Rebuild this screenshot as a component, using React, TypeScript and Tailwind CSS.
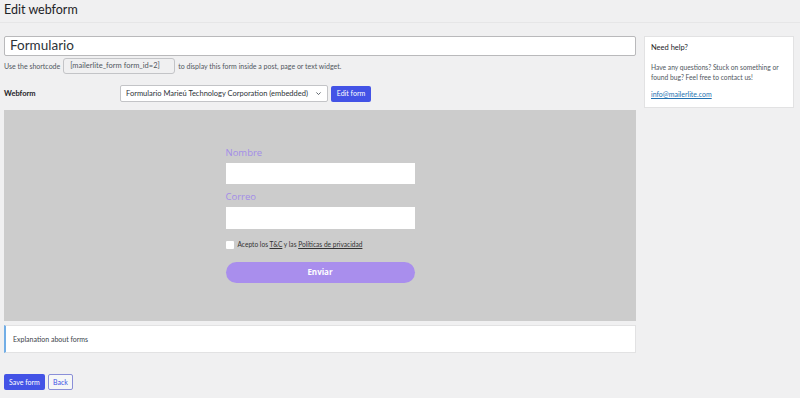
import React from 'react';

const App: React.FC = () => {
  return (
    <div className="min-h-[398px] bg-[#f0f0f1] text-[#3c434a] font-['Lato',sans-serif]">
      <div className="h-[23px] border-b border-[#e6e6e7] px-[4px] pt-[1px]">
        <h1 className="text-[12.5px] leading-[18px] text-[#1d2327]">Edit webform</h1>
      </div>

      <div className="flex gap-[8px] px-[4px] pt-[13px]">
        {/* main column */}
        <div className="w-[632px] flex flex-col">
          <div className="h-[20px] bg-white border border-[#b9b9bb] rounded-[2px] flex items-center px-[5px]">
            <span className="text-[13.5px] leading-none text-[#2c3338]">Formulario</span>
          </div>

          <div className="flex items-center mt-[2px] h-[16px] text-[7px] text-[#50575e] whitespace-nowrap">
            <span>Use the shortcode</span>
            <span className="ml-[3px] h-[16px] w-[112px] bg-[#f0f0f1] border border-[#c3c4c7] rounded-[3px] flex items-center px-[6px] text-[7.5px] text-[#50575e]">
              [mailerlite_form form_id=2]
            </span>
            <span className="ml-[3px]">to display this form inside a post, page or text widget.</span>
          </div>

          <div className="flex items-center mt-[11px] h-[17px]">
            <span className="w-[116px] text-[7.5px] font-bold text-[#1d2327]">Webform</span>
            <div className="h-[17px] w-[208px] bg-white border border-[#c3c4c7] rounded-[2px] flex items-center justify-between pl-[5px] pr-[5px]">
              <span className="text-[7.5px] text-[#2c3338] whitespace-nowrap">Formulario Marieú Technology Corporation (embedded)</span>
              <svg width="7" height="7" viewBox="0 0 10 10" fill="none">
                <path d="M2 3.5 L5 6.5 L8 3.5" stroke="#50575e" strokeWidth="1.3" />
              </svg>
            </div>
            <button className="ml-[3px] h-[16px] w-[40px] bg-[#4353e6] rounded-[2px] text-white text-[7px] leading-none">
              Edit form
            </button>
          </div>

          {/* preview */}
          <div className="mt-[8px] h-[211px] bg-[#cccccc] flex justify-center pt-[37px] font-['Open_Sans',sans-serif]">
            <div className="w-[189px] flex flex-col">
              <label className="text-[9.5px] leading-[12px] text-[#a38de8]">Nombre</label>
              <div className="mt-[4px] h-[21px] bg-white" />
              <label className="mt-[7px] text-[9.5px] leading-[12px] text-[#a38de8]">Correo</label>
              <div className="mt-[4px] h-[22px] bg-white" />
              <div className="mt-[11px] flex items-center gap-[4px]">
                <div className="w-[8px] h-[8px] bg-white rounded-[1px]" />
                <span className="text-[6.6px] text-[#333] font-['Lato',sans-serif]">
                  Acepto los <span className="underline">T&amp;C</span> y las{' '}
                  <span className="underline">Políticas de privacidad</span>
                </span>
              </div>
              <button className="mt-[12px] h-[21px] rounded-full bg-[#a98eed] text-white text-[8px] font-bold">
                Enviar
              </button>
            </div>
          </div>

          <div className="mt-[4px] h-[28px] bg-white border border-[#e2e2e3] border-l-[2px] border-l-[#72aee6] flex items-center pl-[7px]">
            <span className="text-[7px] text-[#3c434a]">Explanation about forms</span>
          </div>

          <div className="mt-[21px] flex gap-[3px]">
            <button className="h-[16px] w-[41px] bg-[#4353e6] rounded-[2px] text-white text-[7px] leading-none">
              Save form
            </button>
            <button className="h-[16px] w-[25px] bg-[#f6f7f7] border border-[#8a8fd8] rounded-[2px] text-[#4353e6] text-[7px] leading-none">
              Back
            </button>
          </div>
        </div>

        {/* sidebar */}
        <div className="w-[150px] h-[72px] bg-white border border-[#e2e2e3] pl-[6px] pr-[2px] pt-[5px]">
          <div className="text-[7.5px] text-[#1d2327]">Need help?</div>
          <p className="mt-[9px] text-[6.7px] leading-[10px] text-[#50575e]">
            Have any questions? Stuck on something or found bug? Feel free to contact us!
          </p>
          <a className="block mt-[7px] text-[7px] text-[#2271b1] underline">info@mailerlite.com</a>
        </div>
      </div>
    </div>
  );
};

export default App;
